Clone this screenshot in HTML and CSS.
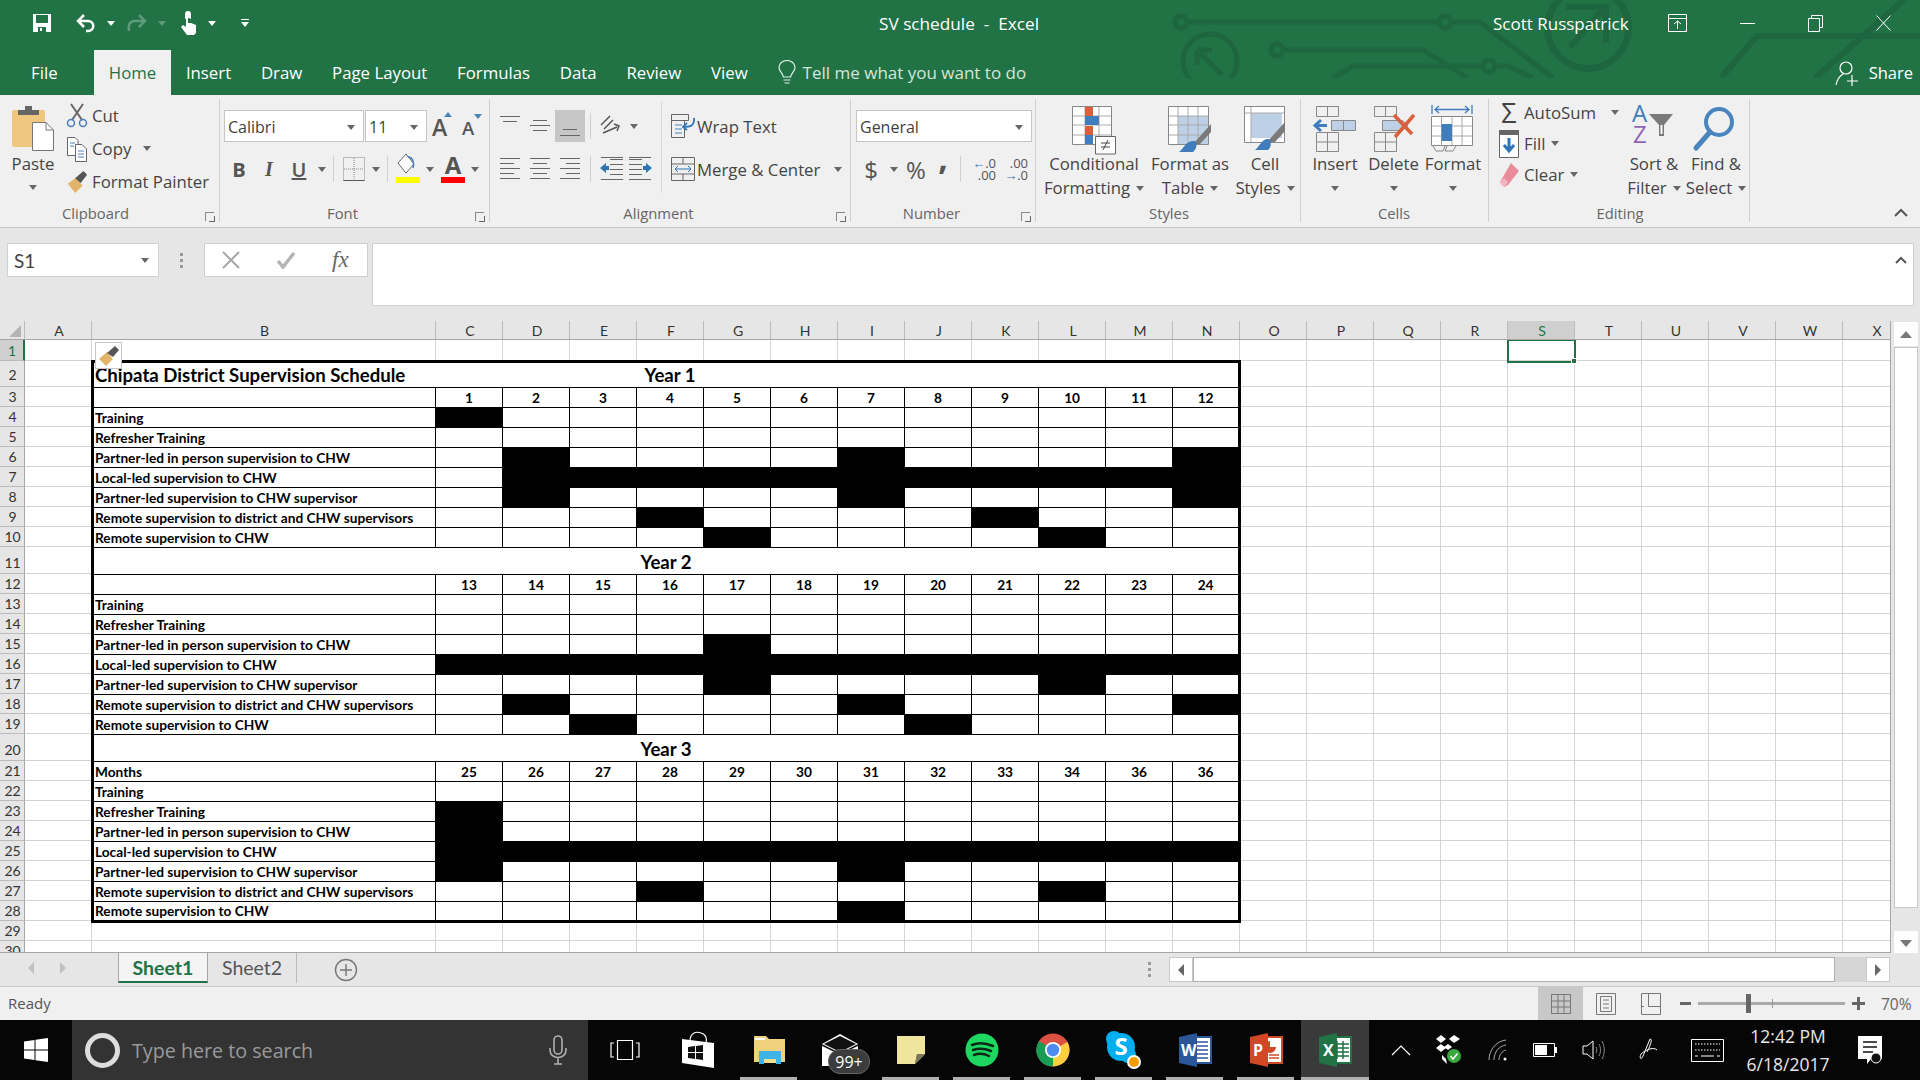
FILE: index.html
```html
<!DOCTYPE html>
<html lang="en">
<head>
    <meta charset="UTF-8">
    <title>SV schedule - Excel</title>
    <link rel="stylesheet" href="styles.css">
</head>
<body>
<div class="app">

    <!-- title bar and tabs -->
    <div class="top">
        <svg class="circuit" width="760" height="78" viewBox="0 0 760 78" fill="none" stroke="#1d663f" stroke-width="5">
            <circle cx="21" cy="22" r="6"/><path d="M27 22H279M291 22H320L393 78"/>
            <circle cx="285" cy="22" r="6"/>
            <circle cx="117" cy="50" r="6"/><path d="M123 50H263L308 78"/>
            <path d="M173 78L193 66H323M335 66H348L373 78"/><circle cx="329" cy="66" r="6"/>
            <circle cx="50" cy="61" r="27"/><path d="M37 50L62 75M37 50H52M37 50V65"/>
            <circle cx="428" cy="28" r="40.500" stroke-width="7"/><path d="M410 47L444 8M406 7H446V43" stroke-width="6"/>
            <path d="M561 78L597 36H760M655 78L744 0" stroke-width="6"/>
        </svg>
        <div class="titlebar">
            <div class="qat">
                <svg class="qat-save" width="20" height="20" viewBox="0 0 20 20"><path d="M1 1H19V19H1Z" fill="#fff"/><path d="M4 2H16V10H4Z" fill="#217346"/><path d="M6 14H14V19H6Z" fill="#217346"/><path d="M8 15H10V18H8Z" fill="#fff"/></svg>
                <svg class="qat-undo" width="22" height="22" viewBox="0 0 22 22" fill="none" stroke="#fff" stroke-width="2.500"><path d="M9 3L3 9L9 15M3 9H13C20 9 20 19 13 19H11"/></svg>
                <span class="caret caret-white qat-caret"></span>
                <svg class="qat-redo" width="22" height="22" viewBox="0 0 22 22" fill="none" stroke="#5f9a7b" stroke-width="2.500"><path d="M13 3L19 9L13 15M19 9H9C3 9 2 14 3 19"/></svg>
                <span class="caret caret-dim qat-caret"></span>
                <svg class="qat-touch" width="18" height="26" viewBox="0 0 18 26" fill="#fff"><path d="M5 9V4A3 3 0 0 1 11 4V9A5 5 0 0 0 5 9Z"/><path d="M6 6H8V13H11L16 15V23L14 25H7L1 17L3 15L6 17Z"/></svg>
                <span class="caret caret-white qat-caret"></span>
                <span class="qat-more"><i></i><span class="caret caret-white"></span></span>
            </div>
            <div class="doc-title">SV schedule &nbsp;-&nbsp; Excel</div>
            <div class="user">Scott Russpatrick</div>
            <div class="win-btns">
                <svg width="19" height="18" viewBox="0 0 19 18" fill="none" stroke="#fff"><path d="M.5.500H18.500V17.500H.5ZM.5 4.500H18.500M9.500 15V7M6 10L9.500 7L13 10"/></svg>
                <svg width="15" height="18" viewBox="0 0 15 18" stroke="#fff"><path d="M0 9.500H15"/></svg>
                <svg width="15" height="18" viewBox="0 0 15 18" fill="none" stroke="#fff"><path d="M.5 4.500H11.500V17.500H.5ZM3.500 4V1.500H14.500V13.500H12"/></svg>
                <svg width="15" height="18" viewBox="0 0 15 18" stroke="#fff"><path d="M.5 1.500L14.500 16.500M14.500 1.500L.5 16.500"/></svg>
            </div>
        </div>
        <div class="tabs">
            <span class="tab tab-file">File</span>
            <span class="tab tab-active">Home</span>
            <span class="tab">Insert</span>
            <span class="tab">Draw</span>
            <span class="tab">Page Layout</span>
            <span class="tab">Formulas</span>
            <span class="tab">Data</span>
            <span class="tab">Review</span>
            <span class="tab">View</span>
            <span class="tell">
                <svg width="18" height="26" viewBox="0 0 18 26" fill="none" stroke="#dfeee6" stroke-width="1.200"><path d="M5.500 17C4 12 1 11 1 7.500A8 7 0 0 1 17 7.500C17 11 14 12 12.500 17ZM5.500 20H12.500M6.500 23H11.500"/></svg>
                Tell me what you want to do
            </span>
            <span class="share">
                <svg width="24" height="26" viewBox="0 0 24 26" fill="none" stroke="#fff" stroke-width="1.200"><circle cx="11" cy="8" r="6"/><path d="M1 25C2 19 5 16 8 14M17 15V26M12 21H23"/></svg>
                Share
            </span>
        </div>
    </div>

    <!-- ribbon -->
    <div class="ribbon">
        <section class="group g-clipboard">
            <div class="group-body">
                <div class="big big-paste">
                    <svg class="big-icon" width="42" height="48" viewBox="0 0 42 48"><rect x="0" y="6" width="33" height="37" rx="2" fill="#efc77e"/><path d="M6 6H27V11H6ZM13 2H20V6H13Z" fill="#666"/><path d="M20.500 18.500H34L41.500 26V46.500H20.500Z" fill="#fff" stroke="#777"/><path d="M34 18V26H41" fill="none" stroke="#777"/></svg>
                    <span>Paste</span>
                    <span class="caret"></span>
                </div>
                <div class="stack stack-clip">
                    <div class="row-btn">
                        <svg width="22" height="26" viewBox="0 0 22 26" fill="none"><path d="M5 1L16 17M17 1L6 17" stroke="#666" stroke-width="2"/><circle cx="5" cy="20" r="3.500" stroke="#4a7ebb" stroke-width="1.500"/><circle cx="17" cy="20" r="3.500" stroke="#4a7ebb" stroke-width="1.500"/></svg>
                        <span>Cut</span>
                    </div>
                    <div class="row-btn">
                        <svg width="22" height="26" viewBox="0 0 22 26" fill="#fff" stroke="#666"><path d="M1.500 1.500H9L12 4.500V19.500H1.500Z"/><path d="M9.500 8.500H16L20.500 13V25.500H9.500Z"/><path d="M4 7H9M4 10H8M12 15H18M12 18H18M12 21H18" stroke="#4a7ebb"/></svg>
                        <span>Copy</span><span class="caret caret-gap"></span>
                    </div>
                    <div class="row-btn">
                        <svg width="22" height="24" viewBox="0 0 24 26"><path d="M2 15L11 8L18 17L10 25Z" fill="#e3b36a"/><path d="M10 9L19 1L23 5L16 14Z" fill="#555"/></svg>
                        <span>Format Painter</span>
                    </div>
                </div>
            </div>
            <div class="group-label">Clipboard<i class="launcher"></i></div>
        </section>

        <section class="group g-font">
            <div class="group-body rows-2">
                <div class="tool-row">
                    <div class="combo combo-font">Calibri<span class="caret"></span></div>
                    <div class="combo combo-size">11<span class="caret"></span></div>
                    <span class="grow-a">A<i class="tri tri-up"></i></span>
                    <span class="shrink-a">A<i class="tri tri-down"></i></span>
                </div>
                <div class="tool-row">
                    <span class="tb t-b">B</span>
                    <span class="tb t-i">I</span>
                    <span class="tb t-u">U</span>
                    <span class="tb-caret"><span class="caret"></span></span>
                    <i class="vsep"></i>
                    <span class="tb tb-28">
                        <svg width="22" height="24" viewBox="0 0 22 24" fill="none" stroke="#888" stroke-dasharray="1 1"><path d="M.5.500H21.500V23.500H.5ZM11 1V23M1 12H21"/><path d="M.5 23.500H21.500" stroke-dasharray="none" stroke="#555"/></svg>
                    </span>
                    <span class="tb-caret"><span class="caret"></span></span>
                    <i class="vsep"></i>
                    <span class="tb tb-28 fill-btn">
                        <svg width="24" height="22" viewBox="0 0 24 22"><path d="M10 1L2 10L10 20L18 11Z" fill="#fff" stroke="#666"/><path d="M12 4C18 4 18 12 17 15" fill="none" stroke="#4a7ebb" stroke-width="1.500"/></svg>
                        <i class="color-bar bar-yellow"></i>
                    </span>
                    <span class="tb-caret tb-tight"><span class="caret"></span></span>
                    <span class="tb tb-28 fill-btn">
                        <span class="font-a">A</span>
                        <i class="color-bar bar-red"></i>
                    </span>
                    <span class="tb-caret tb-tight"><span class="caret"></span></span>
                </div>
            </div>
            <div class="group-label">Font<i class="launcher"></i></div>
        </section>

        <section class="group g-align">
            <div class="group-body">
                <div class="rows-2 align-tools">
                    <div class="tool-row">
                        <span class="tb"><i class="lines l-top"></i></span>
                        <span class="tb"><i class="lines l-mid"></i></span>
                        <span class="tb tb-on"><i class="lines l-bot"></i></span>
                        <i class="vsep vsep-a"></i>
                        <span class="tb">
                            <svg width="26" height="26" viewBox="0 0 26 26" fill="none" stroke="#555"><path d="M3 12L12 3M6 16L15 7M5 20L19 14M16 11L21 13L19 18" stroke-width="1.500"/></svg>
                        </span>
                        <span class="tb-caret"><span class="caret"></span></span>
                    </div>
                    <div class="tool-row">
                        <span class="tb"><i class="lines l-left"></i></span>
                        <span class="tb"><i class="lines l-center"></i></span>
                        <span class="tb"><i class="lines l-right"></i></span>
                        <i class="vsep vsep-a"></i>
                        <span class="tb">
                            <svg width="24" height="24" viewBox="0 0 24 24" stroke="#666"><path d="M11 2.500H24M11 7.500H24M11 12.500H24M11 17.500H24M2 22.500H24M2 .5H24" stroke-width="1"/><path d="M1 11L7 6V9H10V13H7V16Z" fill="#2e75b6" stroke="none"/></svg>
                        </span>
                        <span class="tb">
                            <svg width="24" height="24" viewBox="0 0 24 24" stroke="#666"><path d="M0 2.500H13M0 7.500H13M0 12.500H13M0 17.500H13M0 22.500H22M0 .5H22" stroke-width="1"/><path d="M23 11L17 6V9H14V13H17V16Z" fill="#2e75b6" stroke="none"/></svg>
                        </span>
                    </div>
                </div>
                <i class="vsep-full"></i>
                <div class="rows-2 wrap-tools">
                    <div class="tool-row text-tool">
                        <svg width="24" height="26" viewBox="0 0 24 26" fill="none" stroke="#666"><path d="M.5 1.500H17.500V7.500H.5ZM.5 7.500H13.500V24.500H.5Z"/><path d="M4 12H11M4 16H11M4 20H11" stroke="#4a7ebb"/><path d="M23 5C24 13 19 14 12 14M16 10L12 14L16 17" stroke="#2e75b6" stroke-width="1.800"/></svg>
                        <span>Wrap Text</span>
                    </div>
                    <div class="tool-row text-tool">
                        <svg width="24" height="24" viewBox="0 0 24 24" fill="none" stroke="#666"><path d="M.5.500H23.500V23.500H.5ZM1 7H23M1 17H23M12 1V7M12 17V23"/><path d="M4 12H20M7 9L4 12L7 15M17 9L20 12L17 15" stroke="#2e75b6"/></svg>
                        <span>Merge &amp; Center</span><span class="caret caret-merge"></span>
                    </div>
                </div>
            </div>
            <div class="group-label">Alignment<i class="launcher"></i></div>
        </section>

        <section class="group g-number">
            <div class="group-body rows-2">
                <div class="tool-row">
                    <div class="combo combo-format">General<span class="caret"></span></div>
                </div>
                <div class="tool-row">
                    <span class="sym sym-dollar">$</span>
                    <span class="tb-caret"><span class="caret"></span></span>
                    <span class="sym sym-pct">%</span>
                    <span class="sym sym-comma">,</span>
                    <i class="vsep vsep-n"></i>
                    <span class="dec"><span><b>←</b>.0</span><span>.00</span></span>
                    <span class="dec dec-r"><span>.00</span><span><b>→</b>.0</span></span>
                </div>
            </div>
            <div class="group-label">Number<i class="launcher"></i></div>
        </section>

        <section class="group g-styles">
            <div class="group-body">
                <div class="big big-cf">
                    <svg class="big-icon" width="44" height="48" viewBox="0 0 44 48" fill="none"><path d="M.5 2.500H39.500V40.500H.5Z" fill="#fff" stroke="#888"/><path d="M13 3V40M27 3V40M1 12H39M1 21H39M1 31H39" stroke="#aaa"/><path d="M13 3H21V12H13ZM13 22H21V31H13Z" fill="#d9603b"/><path d="M13 12H27V21H13ZM13 31H21V40H13Z" fill="#3f7dbc"/><path d="M23.500 32.500H43.500V50H23.500Z" fill="#fff" stroke="#666"/><path d="M29 39H38M29 43H38M36 36L31 46" stroke="#444"/></svg>
                    <span>Conditional</span>
                    <span>Formatting<i class="caret caret-inline"></i></span>
                </div>
                <div class="big big-table">
                    <svg class="big-icon" width="44" height="48" viewBox="0 0 44 48" fill="none"><path d="M.5 2.500H40.500V40.500H.5Z" fill="#fff" stroke="#888"/><path d="M10 12H40V40H10Z" fill="#bdd0e6"/><path d="M10 3V40M20 3V40M30 3V40M1 12H40M1 21H40M1 31H40" stroke="#aaa"/><path d="M25 40L43 20V28L32 40Z" fill="#7a7a7a"/><path d="M11 48C16 44 18 36 27 37C30 40 28 46 25 48Z" fill="#3f7dbc"/></svg>
                    <span>Format as</span>
                    <span>Table<i class="caret caret-inline"></i></span>
                </div>
                <div class="big big-cell">
                    <svg class="big-icon" width="42" height="48" viewBox="0 0 42 48" fill="none"><path d="M.5 2.500H40.500V38.500H.5Z" fill="#fff" stroke="#888"/><path d="M7 9H38V34H7Z" fill="#bdd0e6"/><path d="M1 9H40M7 3V38" stroke="#aaa"/><path d="M23 38L41 18V27L31 38Z" fill="#7a7a7a"/><path d="M11 46C16 42 18 34 25 35C28 38 27 44 24 46Z" fill="#3f7dbc"/></svg>
                    <span>Cell</span>
                    <span>Styles<i class="caret caret-inline"></i></span>
                </div>
            </div>
            <div class="group-label">Styles</div>
        </section>

        <section class="group g-cells">
            <div class="group-body">
                <div class="big big-ins">
                    <svg class="big-icon" width="44" height="48" viewBox="0 0 44 48" fill="none" stroke="#888"><path d="M3.500 2.500H25.500V12.500H3.500ZM14.500 3V12M3.500 28.500H25.500V47.500H3.500ZM14.500 29V47M4 38H25"/><path d="M18.500 16.500H42.500V26.500H18.500ZM30.500 17V26" fill="#bdd0e6"/><path d="M14 21.500H3M8 16L2 21.500L8 27" stroke="#3f7dbc" stroke-width="3"/></svg>
                    <span>Insert</span>
                    <span class="caret caret-big"></span>
                </div>
                <div class="big big-del">
                    <svg class="big-icon" width="44" height="48" viewBox="0 0 44 48" fill="none" stroke="#888"><path d="M2.500 2.500H24.500V12.500H2.500ZM13.500 3V12M2.500 28.500H24.500V47.500H2.500ZM13.500 29V47M3 38H24"/><path d="M10.500 16.500H30L36 21.500L30 26.500H10.500Z" fill="#bdd0e6"/><path d="M22 11L40 30M42 11L23 33" stroke="#d9603b" stroke-width="3.500"/></svg>
                    <span>Delete</span>
                    <span class="caret caret-big"></span>
                </div>
                <div class="big big-fmt">
                    <svg class="big-icon" width="44" height="48" viewBox="0 0 44 48" fill="none"><path d="M1 1V10M41 1V10M4 5.500H38M8 2L4 5.500L8 9M34 2L38 5.500L34 9" stroke="#3f7dbc" stroke-width="1.300"/><path d="M.5 12.500H41.500V41.500H.5Z" fill="#fff" stroke="#888"/><path d="M1 22H41M1 32H41M10.500 13V41M21 13V41M31 13V41" stroke="#aaa"/><path d="M10.500 20H21V37H10.500Z" fill="#3f7dbc"/><path d="M2 42L5 47H12L14 42M16 42L14 47H22L25 42" stroke="#888"/></svg>
                    <span>Format</span>
                    <span class="caret caret-big"></span>
                </div>
            </div>
            <div class="group-label">Cells</div>
        </section>

        <section class="group g-edit">
            <div class="group-body">
                <div class="stack stack-edit">
                    <div class="row-btn">
                        <span class="sigma">Σ</span><span>AutoSum</span><span class="caret caret-sum"></span>
                    </div>
                    <div class="row-btn">
                        <svg class="edit-ic" width="20" height="28" viewBox="0 0 20 28"><path d="M.5 .5H19.500V27.500H.5Z" fill="#fff" stroke="#666"/><path d="M0 0H20V5H0Z" fill="#666"/><path d="M10 8V20M5 15L10 21L15 15" fill="none" stroke="#2e75b6" stroke-width="3"/></svg>
                        <span>Fill</span><span class="caret caret-gap-s"></span>
                    </div>
                    <div class="row-btn">
                        <svg class="edit-ic" width="20" height="26" viewBox="0 0 20 26"><path d="M12 1L20 9L9 23L5 25L1 20Z" fill="#e98b9b"/><path d="M1 20L5 16L9 20L6 24L3 24Z" fill="#f2b8c1"/></svg>
                        <span>Clear</span><span class="caret caret-gap-s"></span>
                    </div>
                </div>
                <div class="big big-sort">
                    <svg class="big-icon" width="44" height="48" viewBox="0 0 44 48">
                        <text x="0" y="18" class="az az-a">A</text>
                        <text x="1" y="39" class="az az-z">Z</text>
                        <path d="M17 10H41L32 21V32H27V21Z" fill="#7a7a7a"/><path d="M28.500 21H30.500V30H28.500Z" fill="#fff"/>
                    </svg>
                    <span>Sort &amp;</span>
                    <span>Filter<i class="caret caret-inline"></i></span>
                </div>
                <div class="big big-find">
                    <svg class="big-icon" width="44" height="48" viewBox="0 0 44 48" fill="none"><circle cx="25" cy="18" r="13" stroke="#4a84bd" stroke-width="4"/><path d="M16 28L2 44" stroke="#4a84bd" stroke-width="5" stroke-linecap="round"/></svg>
                    <span>Find &amp;</span>
                    <span>Select<i class="caret caret-inline"></i></span>
                </div>
            </div>
            <div class="group-label">Editing</div>
        </section>

        <svg class="collapse" width="14" height="9" viewBox="0 0 14 9" fill="none" stroke="#555" stroke-width="2"><path d="M1 8L7 2L13 8"/></svg>
    </div>

    <!-- formula bar -->
    <div class="formula">
        <div class="name-box">S1<span class="caret"></span></div>
        <div class="f-dots"><i></i><i></i><i></i></div>
        <div class="f-btns">
            <svg width="18" height="18" viewBox="0 0 18 18" stroke="#a6a6a6" stroke-width="2"><path d="M1 1L17 17M17 1L1 17"/></svg>
            <svg width="20" height="18" viewBox="0 0 20 18" fill="none" stroke="#b4b4b4" stroke-width="3.500"><path d="M2 10L7 16L18 2"/></svg>
            <span class="fx">fx</span>
        </div>
        <div class="f-input">
            <svg class="f-chevron" width="12" height="8" viewBox="0 0 12 8" fill="none" stroke="#555" stroke-width="2"><path d="M1 7L6 2L11 7"/></svg>
        </div>
    </div>

    <!-- worksheet -->
    <div class="sheet">
        <div class="grid">
            <div class="col-heads">
                <span class="corner"><i></i></span>
                <span class="ch">A</span><span class="ch ch-b">B</span><span class="ch">C</span><span class="ch">D</span><span class="ch">E</span><span class="ch">F</span><span class="ch">G</span><span class="ch">H</span><span class="ch">I</span><span class="ch">J</span><span class="ch">K</span><span class="ch">L</span><span class="ch">M</span><span class="ch">N</span><span class="ch">O</span><span class="ch">P</span><span class="ch">Q</span><span class="ch">R</span><span class="ch ch-on">S</span><span class="ch">T</span><span class="ch">U</span><span class="ch">V</span><span class="ch">W</span><span class="ch">X</span>
            </div>
            <div class="body">
                <div class="row r-1 r-on"><span>1</span></div>
                <div class="row r-tall"><span>2</span></div>
                <div class="row"><span>3</span></div>
                <div class="row"><span>4</span></div>
                <div class="row"><span>5</span></div>
                <div class="row"><span>6</span></div>
                <div class="row"><span>7</span></div>
                <div class="row"><span>8</span></div>
                <div class="row"><span>9</span></div>
                <div class="row"><span>10</span></div>
                <div class="row r-year"><span>11</span></div>
                <div class="row"><span>12</span></div>
                <div class="row"><span>13</span></div>
                <div class="row"><span>14</span></div>
                <div class="row"><span>15</span></div>
                <div class="row"><span>16</span></div>
                <div class="row"><span>17</span></div>
                <div class="row"><span>18</span></div>
                <div class="row"><span>19</span></div>
                <div class="row r-year"><span>20</span></div>
                <div class="row"><span>21</span></div>
                <div class="row"><span>22</span></div>
                <div class="row"><span>23</span></div>
                <div class="row"><span>24</span></div>
                <div class="row"><span>25</span></div>
                <div class="row"><span>26</span></div>
                <div class="row"><span>27</span></div>
                <div class="row"><span>28</span></div>
                <div class="row"><span>29</span></div>
                <div class="row"><span>30</span></div>

                <div class="col-lines">
                    <i class="cl-a"></i><i class="cl-b"></i><i></i><i></i><i></i><i></i><i></i><i></i><i></i><i></i><i></i><i></i><i></i><i></i><i></i><i></i><i></i><i></i><i></i><i></i><i></i><i></i><i></i>
                </div>

                <table class="schedule">
                    <colgroup><col class="c-label"><col span="12" class="c-month"></colgroup>
                    <tr class="t-title"><th>Chipata District Supervision Schedule</th><td colspan="7" class="year">Year 1</td><td colspan="5"></td></tr>
                    <tr class="t-head"><th></th><td>1</td><td>2</td><td>3</td><td>4</td><td>5</td><td>6</td><td>7</td><td>8</td><td>9</td><td>10</td><td>11</td><td>12</td></tr>
                    <tr><th>Training</th><td class="k"></td><td></td><td></td><td></td><td></td><td></td><td></td><td></td><td></td><td></td><td></td><td></td></tr>
                    <tr><th>Refresher Training</th><td></td><td></td><td></td><td></td><td></td><td></td><td></td><td></td><td></td><td></td><td></td><td></td></tr>
                    <tr><th>Partner-led in person supervision to CHW</th><td></td><td class="k"></td><td></td><td></td><td></td><td></td><td class="k"></td><td></td><td></td><td></td><td></td><td class="k"></td></tr>
                    <tr><th>Local-led supervision to CHW</th><td></td><td class="k"></td><td class="k"></td><td class="k"></td><td class="k"></td><td class="k"></td><td class="k"></td><td class="k"></td><td class="k"></td><td class="k"></td><td class="k"></td><td class="k"></td></tr>
                    <tr><th>Partner-led supervision to CHW supervisor</th><td></td><td class="k"></td><td></td><td></td><td></td><td></td><td class="k"></td><td></td><td></td><td></td><td></td><td class="k"></td></tr>
                    <tr><th>Remote supervision to district and CHW supervisors</th><td></td><td></td><td></td><td class="k"></td><td></td><td></td><td></td><td></td><td class="k"></td><td></td><td></td><td></td></tr>
                    <tr><th>Remote supervision to CHW</th><td></td><td></td><td></td><td></td><td class="k"></td><td></td><td></td><td></td><td></td><td class="k"></td><td></td><td></td></tr>

                    <tr class="t-year"><td colspan="13" class="year">Year 2</td></tr>
                    <tr class="t-head"><th></th><td>13</td><td>14</td><td>15</td><td>16</td><td>17</td><td>18</td><td>19</td><td>20</td><td>21</td><td>22</td><td>23</td><td>24</td></tr>
                    <tr><th>Training</th><td></td><td></td><td></td><td></td><td></td><td></td><td></td><td></td><td></td><td></td><td></td><td></td></tr>
                    <tr><th>Refresher Training</th><td></td><td></td><td></td><td></td><td></td><td></td><td></td><td></td><td></td><td></td><td></td><td></td></tr>
                    <tr><th>Partner-led in person supervision to CHW</th><td></td><td></td><td></td><td></td><td class="k"></td><td></td><td></td><td></td><td></td><td></td><td></td><td></td></tr>
                    <tr><th>Local-led supervision to CHW</th><td class="k"></td><td class="k"></td><td class="k"></td><td class="k"></td><td class="k"></td><td class="k"></td><td class="k"></td><td class="k"></td><td class="k"></td><td class="k"></td><td class="k"></td><td class="k"></td></tr>
                    <tr><th>Partner-led supervision to CHW supervisor</th><td></td><td></td><td></td><td></td><td class="k"></td><td></td><td></td><td></td><td></td><td class="k"></td><td></td><td></td></tr>
                    <tr><th>Remote supervision to district and CHW supervisors</th><td></td><td class="k"></td><td></td><td></td><td></td><td></td><td class="k"></td><td></td><td></td><td></td><td></td><td class="k"></td></tr>
                    <tr><th>Remote supervision to CHW</th><td></td><td></td><td class="k"></td><td></td><td></td><td></td><td></td><td class="k"></td><td></td><td></td><td></td><td></td></tr>

                    <tr class="t-year"><td colspan="13" class="year">Year 3</td></tr>
                    <tr class="t-head"><th>Months</th><td>25</td><td>26</td><td>27</td><td>28</td><td>29</td><td>30</td><td>31</td><td>32</td><td>33</td><td>34</td><td>36</td><td>36</td></tr>
                    <tr><th>Training</th><td></td><td></td><td></td><td></td><td></td><td></td><td></td><td></td><td></td><td></td><td></td><td></td></tr>
                    <tr><th>Refresher Training</th><td class="k"></td><td></td><td></td><td></td><td></td><td></td><td></td><td></td><td></td><td></td><td></td><td></td></tr>
                    <tr><th>Partner-led in person supervision to CHW</th><td class="k"></td><td></td><td></td><td></td><td></td><td></td><td></td><td></td><td></td><td></td><td></td><td></td></tr>
                    <tr><th>Local-led supervision to CHW</th><td class="k"></td><td class="k"></td><td class="k"></td><td class="k"></td><td class="k"></td><td class="k"></td><td class="k"></td><td class="k"></td><td class="k"></td><td class="k"></td><td class="k"></td><td class="k"></td></tr>
                    <tr><th>Partner-led supervision to CHW supervisor</th><td class="k"></td><td></td><td></td><td></td><td></td><td></td><td class="k"></td><td></td><td></td><td></td><td></td><td></td></tr>
                    <tr><th>Remote supervision to district and CHW supervisors</th><td></td><td></td><td></td><td class="k"></td><td></td><td></td><td></td><td></td><td></td><td class="k"></td><td></td><td></td></tr>
                    <tr><th>Remote supervision to CHW</th><td></td><td></td><td></td><td></td><td></td><td></td><td class="k"></td><td></td><td></td><td></td><td></td><td></td></tr>
                </table>

                <div class="paste-tag">
                    <svg width="22" height="22" viewBox="0 0 22 22"><path d="M1 14L9 7L15 14L8 21Z" fill="#e3b36a"/><path d="M9 8L17 1L21 5L15 12Z" fill="#555"/></svg>
                </div>
                <div class="selection"></div>
            </div>
        </div>
        <div class="vscroll">
            <span class="sb-btn"><i class="tri-g tri-g-up"></i></span>
            <span class="sb-thumb"></span>
            <span class="sb-btn"><i class="tri-g tri-g-down"></i></span>
        </div>
    </div>

    <!-- sheet tabs -->
    <div class="sheet-tabs">
        <div class="tab-nav"><i class="nav-l"></i><i class="nav-r"></i></div>
        <span class="stab stab-on">Sheet1</span>
        <span class="stab">Sheet2</span>
        <span class="stab-add">
            <svg width="24" height="24" viewBox="0 0 24 24" fill="none" stroke="#777" stroke-width="1.400"><circle cx="12" cy="12" r="10.500"/><path d="M12 6V18M6 12H18"/></svg>
        </span>
        <div class="h-dots"><i></i><i></i><i></i></div>
        <div class="hscroll">
            <span class="hs-btn"><i class="nav-dark-l"></i></span>
            <span class="hs-thumb"></span>
            <span class="hs-btn"><i class="nav-dark-r"></i></span>
        </div>
    </div>

    <!-- status bar -->
    <div class="status">
        <span class="ready">Ready</span>
        <div class="views">
            <span class="view view-on"><svg width="20" height="20" viewBox="0 0 20 20" fill="none" stroke="#777"><path d="M.5.500H19.500V19.500H.5ZM7 1V19M13 1V19M1 7H19M1 13H19"/></svg></span>
            <span class="view"><svg width="20" height="22" viewBox="0 0 20 22" fill="none" stroke="#777"><path d="M.5.500H19.500V21.500H.5ZM4.500 3.500H15.500V18.500H4.500ZM7 7H13M7 11H13M7 15H13"/></svg></span>
            <span class="view"><svg width="20" height="22" viewBox="0 0 20 22" fill="none" stroke="#777"><path d="M.5.500H19.500V21.500H.5ZM7.500 1V13.500H19M.5 13.500H3"/></svg></span>
        </div>
        <div class="zoom">
            <i class="z-minus"></i>
            <div class="z-track"><i class="z-tick"></i><i class="z-thumb"></i></div>
            <i class="z-plus"></i>
            <span class="z-pct">70%</span>
        </div>
    </div>

    <!-- windows taskbar -->
    <div class="taskbar">
        <div class="start">
            <svg width="24" height="24" viewBox="0 0 24 24" fill="#fff"><path d="M0 3.500L10.500 2V11.500H0ZM11.500 1.800L24 0V11.500H11.500ZM0 12.500H10.500V22L0 20.500ZM11.500 12.500H24V24L11.500 22.200Z"/></svg>
        </div>
        <div class="search">
            <span class="cortana"></span>
            <span class="search-text">Type here to search</span>
            <svg class="mic" width="18" height="30" viewBox="0 0 18 30" fill="none" stroke="#b0b0b0" stroke-width="1.600"><rect x="5" y="1" width="8" height="18" rx="4"/><path d="M1 13V15C1 25 17 25 17 15V13M9 23V29M5 29H13"/></svg>
        </div>
        <div class="task-apps">
            <span class="app-ic app-view">
                <svg width="30" height="24" viewBox="0 0 30 24" fill="none" stroke="#fff" stroke-width="1.200"><path d="M7.500 2.500H22.500V21.500H7.500ZM4 5H1V19H4M26 5H29V19H26"/></svg>
            </span>
            <span class="app-ic">
                <svg width="34" height="38" viewBox="0 0 34 38"><path d="M1 8L33 12V37L1 32Z" fill="#fff"/><path d="M9 10C9 2 15 0 20 2C25 3 26 8 25 11" fill="none" stroke="#fff" stroke-width="1.200"/><path d="M7 16L14 15V21H7ZM15 15L22 14V21H15ZM7 22H14V28L7 27ZM15 22H22V29L15 28Z" fill="#111"/></svg>
            </span>
            <span class="app-ic app-open">
                <svg width="34" height="30" viewBox="0 0 34 30"><path d="M2 1H14L17 4H33V27H2Z" fill="#f0d27e"/><path d="M3 3H13V5H3Z" fill="#fff"/><path d="M7 16H29V29H24V24H12V29H7Z" fill="#3fb3e6"/><path d="M12 24H24V28H12Z" fill="#f4dd8b"/></svg>
            </span>
            <span class="app-ic app-mail">
                <svg width="38" height="32" viewBox="0 0 38 32"><path d="M1 10L19 0L37 10V32H1Z" fill="#fff"/><path d="M1 11L19 20L37 11" fill="none" stroke="#111" stroke-width="1.500"/><path d="M3 10L19 2L35 10L19 18Z" fill="#111"/></svg>
                <span class="mail-badge">99+</span>
            </span>
            <span class="app-ic app-open">
                <svg width="30" height="30" viewBox="0 0 30 30"><path d="M1 1H29V19L19 29H1Z" fill="#f0e59c"/><path d="M19 29L21 19H29Z" fill="#7b7758"/><path d="M21 19H29L19 29Z" fill="#7b7758"/></svg>
            </span>
            <span class="app-ic app-open">
                <svg width="34" height="34" viewBox="0 0 34 34" fill="none"><circle cx="17" cy="17" r="16.500" fill="#1ed760"/><path d="M7 12C14 9 21 10 28 13M8 17C14 15 20 15.500 26 18M9 22C14 20 19 20.500 24 23" stroke="#0b2a15" stroke-width="2.500" stroke-linecap="round"/></svg>
            </span>
            <span class="app-ic app-open">
                <svg width="34" height="34" viewBox="0 0 34 34"><circle cx="17" cy="17" r="16.500" fill="#dd5144"/><path d="M17 17L31.500 9A16.500 16.500 0 0 1 17 33.500Z" fill="#ffcd40"/><path d="M17 17L17 33.500A16.500 16.500 0 0 1 3 8Z" fill="#199d55"/><circle cx="17" cy="17" r="8" fill="#fff"/><circle cx="17" cy="17" r="6.200" fill="#4d8bf0"/></svg>
            </span>
            <span class="app-ic app-open">
                <svg width="40" height="40" viewBox="0 0 40 40"><circle cx="10" cy="9" r="8" fill="#00aff0"/><circle cx="24" cy="25" r="8" fill="#00aff0"/><circle cx="17" cy="17" r="14" fill="#00aff0"/><text x="17" y="25" class="skype-s">S</text><circle cx="30" cy="32" r="7" fill="#fff"/><circle cx="30" cy="32" r="5" fill="#f59b00"/></svg>
            </span>
            <span class="app-ic app-open">
                <svg width="34" height="34" viewBox="0 0 34 34"><path d="M14 4H33V30H14Z" fill="#fff" stroke="#2b579a" stroke-width="2"/><path d="M18 9H30M18 13H30M18 17H30M18 21H30M18 25H30" stroke="#2b579a" stroke-width="1.500"/><path d="M1 4L19 0V34L1 30Z" fill="#2b579a"/><text x="3" y="23" class="app-letter">W</text></svg>
            </span>
            <span class="app-ic app-open">
                <svg width="34" height="34" viewBox="0 0 34 34"><path d="M14 4H33V30H14Z" fill="#fff" stroke="#d24726" stroke-width="2"/><path d="M21 8A6 6 0 1 0 27 14H21Z" fill="#d24726"/><path d="M20 22H30M20 25H30" stroke="#d24726" stroke-width="1.500"/><path d="M1 4L19 0V34L1 30Z" fill="#d24726"/><text x="4" y="23" class="app-letter">P</text></svg>
            </span>
            <span class="app-ic app-open app-current">
                <svg width="34" height="34" viewBox="0 0 34 34"><path d="M14 4H33V30H14Z" fill="#fff" stroke="#217346" stroke-width="2"/><path d="M19 8V26M25 8V26M18 11H31M18 15H31M18 19H31M18 23H31" stroke="#217346" stroke-width="1.500"/><path d="M1 4L19 0V34L1 30Z" fill="#217346"/><text x="5" y="23" class="app-letter">X</text></svg>
            </span>
        </div>
        <div class="tray">
            <svg class="t-chev" width="20" height="12" viewBox="0 0 20 12" fill="none" stroke="#fff" stroke-width="1.200"><path d="M1 11L10 2L19 11"/></svg>
            <svg class="t-drop" width="26" height="30" viewBox="0 0 26 30"><path d="M5 0L10 4L5 8L0 4ZM18 0L24 4L18 8L13 4ZM5 9L10 13L5 17L0 13ZM12 9L16 12L12 15L8 12Z" fill="#fff"/><path d="M6 20L10 24L11 29L6 24Z" fill="#fff"/><circle cx="18" cy="21" r="7" fill="#3aa83e"/><path d="M14.500 21L17 24L21.500 18.500" fill="none" stroke="#fff" stroke-width="1.500"/></svg>
            <svg class="t-wifi" width="20" height="22" viewBox="0 0 20 22" fill="none" stroke="#aaa" stroke-width="1"><path d="M1 21C1 10 9 2 18 1M6 21C6 13 11 7 18 6M11 21C11 16 14 12 18 11"/><circle cx="17" cy="20" r="1.500" fill="#fff" stroke="none"/></svg>
            <svg class="t-batt" width="24" height="14" viewBox="0 0 24 14" fill="none" stroke="#fff"><path d="M.5.500H21.500V13.500H.5Z"/><path d="M22 4H24V10H22Z" fill="#fff" stroke="none"/><path d="M2 2H14V12H2Z" fill="#fff" stroke="none"/></svg>
            <svg class="t-vol" width="24" height="24" viewBox="0 0 24 24" fill="none" stroke="#fff"><path d="M1 8H5L11 3V21L5 16H1Z"/><path d="M14 9C15 11 15 13 14 15M17 6C19 10 19 14 17 18M20 3C23 9 23 15 20 21" stroke="#888"/></svg>
            <svg class="t-pen" width="20" height="24" viewBox="0 0 20 24" fill="none" stroke="#fff"><path d="M12 1L5 18C3 23 1 20 3 16C6 13 15 8 19 12M12 1C15 1 12 8 9 14"/></svg>
            <svg class="t-kbd" width="33" height="23" viewBox="0 0 33 23" fill="none" stroke="#fff"><path d="M.5.500H32.500V22.500H.5Z"/><path d="M4 5H29M4 11H29" stroke-dasharray="1.500 1.500"/><path d="M4 17H7M10 17H23M26 17H29"/></svg>
        </div>
        <div class="clock"><span>12:42 PM</span><span>6/18/2017</span></div>
        <div class="notify">
            <svg width="30" height="30" viewBox="0 0 30 30"><path d="M3 1H27V24H16L12 29V24H3Z" fill="#fff"/><path d="M8 7H22M8 12H22M8 17H18" stroke="#111" stroke-width="1.300"/><circle cx="21" cy="23" r="5" fill="#111" stroke="#fff"/></svg>
        </div>
    </div>
</div>
</body>
</html>
```

FILE: styles.css
```css
* {
    box-sizing: border-box;
}

body {
    margin: 0;
    font-family: "Open Sans", "Noto Sans", sans-serif;
    font-size: 16.8px;
    color: #444;
    overflow: hidden;
    background: #fff;
}

i {
    font-style: normal;
}

svg {
    display: block;
    flex: none;
}

.app {
    width: 1920px;
    height: 1080px;
    display: flex;
    flex-direction: column;
}

/* small dropdown triangle used all over the ribbon */
.caret {
    display: inline-block;
    width: 0;
    height: 0;
    border-left: 4.5px solid transparent;
    border-right: 4.5px solid transparent;
    border-top: 5px solid #666;
}

.caret-white {
    border-top-color: #fff;
}

.caret-dim {
    border-top-color: #5f9a7b;
}

/* title bar */
.top {
    height: 95px;
    background: #217346;
    color: #fff;
    position: relative;
    flex: none;
}

.circuit {
    position: absolute;
    left: 1160px;
    top: 0;
}

.titlebar {
    height: 50px;
    display: flex;
    align-items: center;
    position: relative;
}

.qat {
    width: 800px;
    display: flex;
    align-items: center;
    padding-left: 32px;
    margin-top: -4px;
}

.qat-undo {
    margin-left: 23px;
}

.qat-caret {
    margin-left: 10px;
}

.qat-redo {
    margin-left: 11px;
}

.qat-touch {
    margin-left: 14px;
}

.qat-more {
    margin-left: 25px;
    display: flex;
    flex-direction: column;
    align-items: center;
    gap: 2px;
}

.qat-more i {
    width: 8px;
    height: 1.5px;
    background: #fff;
}

.doc-title {
    width: 318px;
    text-align: center;
    font-size: 17.2px;
    margin-top: -3px;
    white-space: nowrap;
}

.user {
    margin-left: 375px;
    width: 137px;
    font-size: 17px;
    white-space: nowrap;
    margin-top: -3px;
}

.win-btns {
    display: flex;
    align-items: center;
    margin-left: 38px;
    margin-top: -4px;
    gap: 53px;
}

.tabs {
    height: 45px;
    display: flex;
    position: relative;
    font-size: 16.8px;
    white-space: nowrap;
}

.tab {
    padding: 0 14.9px;
    line-height: 45px;
    height: 45px;
}

.tab-file {
    width: 94px;
    padding: 0 0 0 31px;
    flex: none;
}

.tab-active {
    background: #f0f0f0;
    color: #217346;
    width: 77px;
    padding: 0;
    text-align: center;
    flex: none;
}

.tell {
    display: flex;
    align-items: center;
    gap: 7px;
    color: #d5e6dc;
    margin-left: 15px;
    font-size: 17px;
}

.share {
    position: absolute;
    right: 7px;
    top: 0;
    height: 45px;
    display: flex;
    align-items: center;
    gap: 10px;
    font-size: 16.500px;
}

/* ribbon */
.ribbon {
    height: 133px;
    background: #f0f0f0;
    border-bottom: 1px solid #c8c8c8;
    display: flex;
    padding-top: 4px;
    position: relative;
    flex: none;
}

.group {
    height: 123px;
    border-right: 1px solid #cfcfcf;
    display: flex;
    flex-direction: column;
    position: relative;
}

.g-clipboard { width: 220px; }
.g-font { width: 270px; padding-left: 4px; }
.g-align { width: 361px; padding-left: 5px; }
.g-number { width: 185px; padding-left: 5px; }
.g-styles { width: 265px; padding-left: 6px; }
.g-cells { width: 188px; padding-left: 5px; }
.g-edit { width: 261px; }

.group-body {
    height: 106px;
    display: flex;
}

.group-label {
    height: 17px;
    line-height: 17px;
    text-align: center;
    font-size: 14.8px;
    color: #666;
    margin-left: -28px;
}

.g-styles .group-label { margin-left: -4px; }
.g-cells .group-label { margin-left: -6px; }
.g-edit .group-label { margin-left: 2px; }

.launcher {
    position: absolute;
    right: 5px;
    bottom: 1px;
    width: 9px;
    height: 9px;
    border-left: 1px solid #888;
    border-top: 1px solid #888;
}

.launcher::after {
    content: "";
    position: absolute;
    right: -1px;
    bottom: -1px;
    width: 5px;
    height: 5px;
    border-right: 1px solid #666;
    border-bottom: 1px solid #666;
}

.big {
    display: flex;
    flex-direction: column;
    align-items: center;
    padding-top: 5px;
    line-height: 24px;
    white-space: nowrap;
    flex: none;
}

.big-icon {
    height: 48px;
    overflow: visible;
}

.caret-big {
    margin-top: 10px;
}

.caret-inline {
    margin-left: 6px;
    vertical-align: 3px;
}

.big-paste { width: 66px; }
.big-paste .caret { margin-top: 9px; }
.big-cf { width: 104px; }
.big-table { width: 88px; }
.big-cell { width: 62px; }
.big-ins { width: 58px; }
.big-del { width: 59px; }
.big-fmt { width: 60px; }
.big-sort { width: 58px; }
.big-find { width: 66px; }

.stack {
    display: flex;
    flex-direction: column;
}

.row-btn {
    height: 33px;
    display: flex;
    align-items: center;
    gap: 4px;
    white-space: nowrap;
}

.caret-gap {
    margin-left: 8px;
}

.rows-2 {
    display: flex;
    flex-direction: column;
    padding-top: 11px;
    gap: 11px;
}

.tool-row {
    height: 32px;
    display: flex;
    align-items: center;
}

.combo {
    height: 32px;
    background: #fff;
    border: 1px solid #c6c6c6;
    display: flex;
    align-items: center;
    justify-content: space-between;
    padding: 2px 8px 0 3px;
    font-size: 16px;
    color: #3f3f3f;
}

.combo-font { width: 140px; }
.combo-size { width: 62px; margin-left: 1px; }
.combo-format { width: 176px; }

.grow-a,
.shrink-a {
    position: relative;
    font-weight: 600;
    color: #555;
    line-height: 1;
}

.grow-a {
    font-size: 23px;
    margin: 2px 0 0 5px;
    width: 30px;
}

.shrink-a {
    font-size: 18.5px;
    width: 24px;
    margin-top: 4px;
}

.tri {
    position: absolute;
    top: -4px;
    right: 10px;
    border-left: 4px solid transparent;
    border-right: 4px solid transparent;
}

.tri-up {
    border-bottom: 5px solid #4a84bd;
}

.tri-down {
    border-top: 5px solid #4a84bd;
    top: -5px;
    right: 4px;
}

.tb {
    width: 30px;
    height: 32px;
    display: flex;
    align-items: center;
    justify-content: center;
    flex: none;
}

.tb-28 {
    width: 28px;
}

.tb-on {
    background: #c6c6c6;
}

.tb-caret {
    width: 14px;
    display: flex;
    justify-content: center;
    flex: none;
    margin-left: 1px;
}

.tb-tight {
    margin-right: 2px;
}

.t-b {
    font-weight: 700;
    font-size: 20px;
    color: #555;
}

.t-i {
    font-style: italic;
    font-weight: 600;
    font-size: 20px;
    color: #555;
    font-family: "Liberation Serif", serif;
}

.t-u {
    font-weight: 600;
    font-size: 20px;
    color: #555;
    text-decoration: underline;
}

.vsep {
    width: 1px;
    height: 26px;
    background: #cfcfcf;
    margin: 0 6px 0 4px;
    flex: none;
}

.vsep-a {
    margin: 0 5px 0 5px;
}

.vsep-n {
    margin: 0 5px 0 5px;
}

.vsep-full {
    width: 1px;
    height: 91px;
    margin: 3px 5px 0 0;
    background: #d8d8d8;
    flex: none;
}

.fill-btn {
    position: relative;
    flex-direction: column;
    justify-content: flex-start;
}

.color-bar {
    position: absolute;
    left: 2px;
    right: 2px;
    bottom: 2px;
    height: 6px;
}

.bar-yellow { background: #ff0; }
.bar-red { background: #f00; }

.font-a {
    font-size: 24px;
    font-weight: 700;
    line-height: 24px;
    color: #555;
}

/* alignment icons, lines drawn with gradients */
.lines {
    display: block;
    width: 20px;
    height: 24px;
    background-repeat: no-repeat;
}

.l-top {
    background-image: linear-gradient(#666, #666), linear-gradient(#666, #666);
    background-size: 20px 1px, 14px 1px;
    background-position: 0 2px, 3px 7px;
}

.l-mid {
    background-image: linear-gradient(#666, #666), linear-gradient(#666, #666), linear-gradient(#666, #666);
    background-size: 14px 1px, 20px 1px, 14px 1px;
    background-position: 3px 6px, 0 11px, 3px 16px;
}

.l-bot {
    background-image: linear-gradient(#666, #666), linear-gradient(#666, #666);
    background-size: 14px 1px, 20px 1px;
    background-position: 3px 15px, 0 21px;
}

.l-left,
.l-center,
.l-right {
    background-image: linear-gradient(#666, #666), linear-gradient(#666, #666), linear-gradient(#666, #666), linear-gradient(#666, #666), linear-gradient(#666, #666);
    height: 24px;
}

.l-left {
    background-size: 20px 1px, 14px 1px, 20px 1px, 14px 1px, 20px 1px;
    background-position: 0 1px, 0 6px, 0 11px, 0 16px, 0 21px;
}

.l-center {
    background-size: 20px 1px, 14px 1px, 20px 1px, 14px 1px, 20px 1px;
    background-position: 0 1px, 3px 6px, 0 11px, 3px 16px, 0 21px;
}

.l-right {
    background-size: 20px 1px, 14px 1px, 20px 1px, 14px 1px, 20px 1px;
    background-position: 0 1px, 6px 6px, 0 11px, 6px 16px, 0 21px;
}

.align-tools .tool-row {
    width: 166px;
}

.text-tool {
    gap: 2px;
    padding-left: 4px;
    white-space: nowrap;
}

.caret-merge {
    margin-left: 12px;
}

.sym {
    color: #555;
    display: flex;
    justify-content: center;
    flex: none;
}

.sym-dollar {
    font-size: 24px;
    width: 30px;
}

.sym-pct {
    font-size: 24px;
    width: 30px;
}

.sym-comma {
    font-size: 34px;
    font-weight: 700;
    width: 24px;
    margin-top: -24px;
}

.dec {
    display: flex;
    flex-direction: column;
    font-size: 13px;
    line-height: 12px;
    width: 28px;
    align-items: flex-end;
    color: #555;
    margin-left: 2px;
}

.dec b {
    color: #2e75b6;
}

.dec-r {
    width: 30px;
}

.sigma {
    font-size: 27px;
    line-height: 1;
    color: #444;
    width: 26px;
    text-align: center;
}

.stack-edit {
    width: 136px;
    padding-left: 7px;
    margin-top: -2px;
}

.stack-edit .row-btn {
    height: 31px;
    gap: 2px;
}

.edit-ic {
    margin: 0 3px;
}

.caret-sum {
    margin-left: 13px;
}

.caret-gap-s {
    margin-left: 4px;
}

.az {
    font-size: 24px;
    font-family: "Open Sans", sans-serif;
}

.az-a { fill: #3f7dbc; }
.az-z { fill: #9364b5; }

.collapse {
    position: absolute;
    right: 12px;
    bottom: 10px;
}

/* formula bar */
.formula {
    height: 93px;
    background: #e6e6e6;
    display: flex;
    align-items: flex-start;
    padding: 15px 0 0 7px;
    flex: none;
}

.name-box {
    width: 152px;
    height: 34px;
    background: #fff;
    border: 1px solid #d0d0d0;
    display: flex;
    align-items: center;
    justify-content: space-between;
    padding: 0 9px 0 6px;
    font-family: Lato, sans-serif;
    font-size: 19px;
}

.f-dots {
    width: 45px;
    height: 34px;
    display: flex;
    flex-direction: column;
    align-items: center;
    justify-content: center;
    gap: 3px;
}

.f-dots i,
.h-dots i {
    width: 3px;
    height: 3px;
    background: #999;
}

.f-btns {
    width: 164px;
    height: 34px;
    background: #fff;
    border: 1px solid #d0d0d0;
    display: flex;
    align-items: center;
    gap: 36px;
    padding-left: 17px;
}

.fx {
    font-family: "Liberation Serif", serif;
    font-style: italic;
    font-size: 23px;
    color: #666;
}

.f-input {
    width: 1542px;
    height: 63px;
    margin-left: 4px;
    background: #fff;
    border: 1px solid #d0d0d0;
    position: relative;
}

.f-chevron {
    position: absolute;
    right: 6px;
    top: 12px;
}

/* worksheet */
.sheet {
    height: 632px;
    display: flex;
    background: #e6e6e6;
    flex: none;
}

.grid {
    width: 1890px;
    height: 632px;
    display: flex;
    flex-direction: column;
    overflow: hidden;
    border-bottom: 1px solid #a6a6a6;
}

.col-heads {
    height: 19px;
    display: flex;
    background: #e6e6e6;
    border-bottom: 1px solid #a6a6a6;
    flex: none;
    font-family: Lato, sans-serif;
    font-size: 14px;
    color: #333;
}

.corner {
    width: 25px;
    position: relative;
    border-right: 1px solid #bbb;
    flex: none;
}

.corner i {
    position: absolute;
    right: 3px;
    bottom: 2px;
    border-left: 12px solid transparent;
    border-bottom: 12px solid #b4b4b4;
}

.ch {
    width: 67px;
    text-align: center;
    border-right: 1px solid #bbb;
    line-height: 19px;
    padding-left: 2px;
    flex: none;
}

.ch-b {
    width: 344px;
}

.ch-on {
    background: #cfcfcf;
    color: #217346;
}

.body {
    position: relative;
    flex: 1;
    background: #fff;
    overflow: hidden;
}

.row {
    height: 20px;
    border-bottom: 1px solid #d4d4d4;
}

.row span {
    display: block;
    width: 25px;
    height: 20px;
    line-height: 20px;
    padding-left: 1px;
    background: #e6e6e6;
    border-right: 1px solid #a6a6a6;
    border-bottom: 1px solid #bbb;
    text-align: center;
    font-family: Lato, sans-serif;
    font-size: 14px;
    color: #333;
    position: relative;
    z-index: 1;
}

.r-1 { height: 21px; }
.r-1 span { height: 21px; line-height: 22px; }
.r-tall { height: 26px; }
.r-tall span { height: 26px; line-height: 27px; }
.r-year { height: 27px; }
.r-year span { height: 27px; line-height: 32px; }

.r-on span {
    background: #cfcfcf;
    border-right: 2px solid #217346;
    color: #217346;
}

.col-lines {
    position: absolute;
    left: 25px;
    top: 0;
    bottom: 0;
    display: flex;
}

.col-lines i {
    width: 67px;
    border-right: 1px solid #d4d4d4;
}

.col-lines .cl-b {
    width: 344px;
}

.schedule {
    position: absolute;
    left: 91px;
    top: 20px;
    width: 1147px;
    table-layout: fixed;
    border-collapse: collapse;
    border: 3px solid #000;
    background: #fff;
    font-family: Lato, sans-serif;
    color: #000;
}

.c-label {
    width: 343px;
}

.c-month {
    width: 67px;
}

.schedule th,
.schedule td {
    height: 20px;
    padding: 0;
    border: 1px solid #000;
    font-size: 13.7px;
    line-height: 18px;
    font-weight: 700;
    text-align: center;
    white-space: nowrap;
    overflow: hidden;
}

.schedule th {
    text-align: left;
    padding-left: 1px;
}

.schedule .k {
    background: #000;
}

.t-title th,
.t-title td {
    height: 26px;
    border-left: 0;
    border-right: 0;
    font-size: 18.6px;
    line-height: 24px;
}

.t-year td {
    height: 27px;
    padding-top: 2px;
    font-size: 18.6px;
    line-height: 24px;
}

.paste-tag {
    position: absolute;
    left: 95px;
    top: 2px;
    width: 27px;
    height: 27px;
    background: #fff;
    border: 1px solid #c6c6c6;
    display: flex;
    align-items: center;
    justify-content: center;
    z-index: 2;
}

.selection {
    position: absolute;
    left: 1507px;
    top: -1px;
    width: 69px;
    height: 24px;
    border: 2px solid #217346;
    z-index: 2;
}

.selection::after {
    content: "";
    position: absolute;
    right: -3px;
    bottom: -3px;
    background: #217346;
    border: 1px solid #fff;
    box-sizing: content-box;
    width: 4px;
    height: 4px;
}

/* scrollbars */
.vscroll {
    width: 30px;
    display: flex;
    flex-direction: column;
    align-items: center;
    padding-top: 1px;
    gap: 1px;
    border-left: 1px solid #a6a6a6;
}

.sb-btn {
    width: 24px;
    height: 24px;
    background: #fff;
    display: flex;
    align-items: center;
    justify-content: center;
    flex: none;
}

.sb-thumb {
    width: 24px;
    height: 561px;
    background: #fff;
    border: 1px solid #c8c8c8;
    flex: none;
    margin-bottom: 22px;
}

.tri-g {
    border-left: 6px solid transparent;
    border-right: 6px solid transparent;
}

.tri-g-up {
    border-bottom: 7px solid #777;
}

.tri-g-down {
    border-top: 7px solid #777;
}

/* sheet tabs */
.sheet-tabs {
    height: 34px;
    background: #e6e6e6;
    display: flex;
    align-items: flex-start;
    border-bottom: 1px solid #c8c8c8;
    position: relative;
    flex: none;
}

.tab-nav {
    width: 118px;
    height: 30px;
    display: flex;
    align-items: center;
    gap: 26px;
    padding-left: 28px;
}

.nav-l,
.nav-r {
    border-top: 6px solid transparent;
    border-bottom: 6px solid transparent;
}

.nav-l {
    border-right: 6px solid #c0c0c0;
}

.nav-r {
    border-left: 6px solid #c0c0c0;
}

.stab {
    height: 30px;
    line-height: 30px;
    padding: 0 14px;
    font-size: 19.5px;
    color: #555;
    border-right: 1px solid #bbb;
    font-family: Lato, sans-serif;
}

.stab-on {
    width: 90px;
    padding: 0;
    text-align: center;
    background: #f4f4f4;
    color: #217346;
    font-weight: 700;
    border-left: 1px solid #a6a6a6;
    border-right: 1px solid #a6a6a6;
    border-bottom: 2px solid #217346;
}

.stab:last-of-type {
    width: 87px;
    text-align: center;
    padding: 0;
}

.stab-add {
    margin: 5px 0 0 37px;
}

.h-dots {
    position: absolute;
    left: 1148px;
    top: 9px;
    display: flex;
    flex-direction: column;
    gap: 3px;
}

.hscroll {
    position: absolute;
    left: 1169px;
    top: 4px;
    width: 721px;
    height: 25px;
    background: #d6d6d6;
    display: flex;
}

.hs-btn {
    width: 24px;
    height: 25px;
    background: #fff;
    border: 1px solid #c8c8c8;
    display: flex;
    align-items: center;
    justify-content: center;
    flex: none;
}

.hs-thumb {
    width: 642px;
    height: 25px;
    background: #fff;
    border: 1px solid #b0b0b0;
    margin-right: 31px;
}

.nav-dark-l,
.nav-dark-r {
    border-top: 6px solid transparent;
    border-bottom: 6px solid transparent;
}

.nav-dark-l {
    border-right: 6px solid #666;
}

.nav-dark-r {
    border-left: 6px solid #666;
}

/* status bar */
.status {
    height: 33px;
    background: #f0f0f0;
    display: flex;
    align-items: center;
    flex: none;
}

.ready {
    padding-left: 8px;
    width: 1538px;
    font-size: 15px;
    color: #555;
    margin-top: -2px;
}

.views {
    display: flex;
    height: 33px;
}

.view {
    width: 45px;
    display: flex;
    align-items: center;
    justify-content: center;
}

.view-on {
    background: #c8c8c8;
}

.zoom {
    display: flex;
    align-items: center;
    margin-left: 7px;
    position: relative;
}

.z-minus {
    width: 11px;
    height: 3px;
    background: #666;
}

.z-track {
    width: 147px;
    height: 3px;
    margin: 0 7px;
    background: #aaa;
    position: relative;
}

.z-tick {
    position: absolute;
    left: 74px;
    top: -3px;
    width: 1px;
    height: 9px;
    background: #999;
}

.z-thumb {
    position: absolute;
    left: 48px;
    top: -8px;
    width: 5px;
    height: 19px;
    background: #666;
}

.z-plus {
    width: 13px;
    height: 13px;
    background: linear-gradient(#666, #666) center/13px 3px no-repeat, linear-gradient(#666, #666) center/3px 13px no-repeat;
}

.z-pct {
    margin-left: 16px;
    font-size: 15.5px;
    color: #666;
}

/* taskbar */
.taskbar {
    height: 60px;
    background: #060607;
    display: flex;
    align-items: center;
    color: #fff;
    flex: none;
}

.start {
    width: 72px;
    display: flex;
    justify-content: center;
}

.search {
    width: 516px;
    height: 60px;
    background: #333;
    display: flex;
    align-items: center;
    padding-left: 13px;
}

.cortana {
    width: 35px;
    height: 35px;
    border-radius: 50%;
    border: 5px solid #ddd;
    flex: none;
}

.search-text {
    margin-left: 12px;
    width: 417px;
    font-size: 19.7px;
    color: #9a9a9a;
}

.task-apps {
    display: flex;
    width: 782px;
    height: 60px;
    margin-left: 3px;
}

.app-ic {
    width: 71px;
    height: 60px;
    display: flex;
    align-items: center;
    justify-content: center;
    position: relative;
    flex: none;
}

.app-view {
    padding-right: 4px;
}

.app-open::after {
    content: "";
    position: absolute;
    left: 7px;
    right: 7px;
    bottom: 0;
    height: 3px;
    background: #b0b0b0;
}

.app-current {
    background: #3a3a3a;
    width: 68px;
}

.app-current::after {
    left: 0;
    right: 0;
}

.mail-badge {
    position: absolute;
    left: 24px;
    top: 29px;
    width: 42px;
    height: 25px;
    line-height: 24px;
    background: #3c3c3c;
    border: 1px solid #666;
    border-radius: 12px;
    text-align: center;
    font-size: 16px;
    color: #fff;
}

.skype-s {
    font-size: 24px;
    font-weight: 700;
    fill: #fff;
    text-anchor: middle;
    font-family: "Open Sans", sans-serif;
}

.app-letter {
    font-size: 16px;
    font-weight: 700;
    fill: #fff;
    font-family: "Open Sans", sans-serif;
}

.tray {
    display: flex;
    align-items: center;
    margin-left: 18px;
}

.t-drop { margin-left: 25px; }
.t-wifi { margin-left: 26px; }
.t-batt { margin-left: 25px; }
.t-vol { margin-left: 25px; }
.t-pen { margin-left: 32px; }
.t-kbd { margin-left: 33px; }

.clock {
    width: 122px;
    margin-left: 3px;
    display: flex;
    flex-direction: column;
    align-items: center;
    font-size: 17.5px;
    line-height: 28px;
    color: #e8e8e8;
}

.notify {
    margin-left: 6px;
}
```
